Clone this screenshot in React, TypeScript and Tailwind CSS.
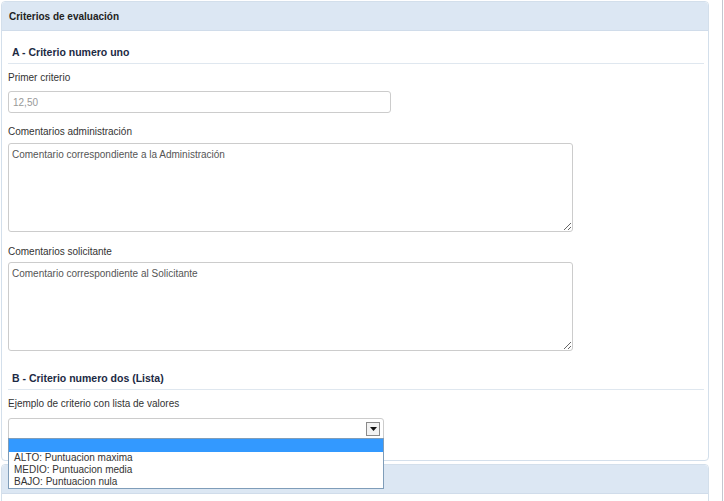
import { useState } from "react";

const font = { fontFamily: '"Liberation Sans", Arial, sans-serif' };

const opciones = [
  "ALTO: Puntuacion maxima",
  "MEDIO: Puntuacion media",
  "BAJO: Puntuacion nula",
];

const SectionTitle = ({ children, className }: { children: string; className?: string }) => (
  <div
    className={`h-[23px] pl-[4px] leading-[22px] text-[10.5px] font-bold text-[#1c2a44] border-b border-[#dfe7ef] ${className ?? ""}`}
  >
    {children}
  </div>
);

const Label = ({ children, className }: { children: string; className?: string }) => (
  <div className={`h-[12px] leading-[12px] text-[10px] text-[#333] ${className ?? ""}`}>{children}</div>
);

export default function App() {
  const [open] = useState(true);

  return (
    <div
      className="w-[723px] h-[501px] overflow-hidden bg-white border-r border-[#c3c7cf] pl-[1px] pt-[1px]"
      style={font}
    >
      {/* panel 1 */}
      <div className="w-[708px] border border-[#d3dfeb] rounded-[4px]">
        <div className="h-[29px] bg-[#dce7f3] border-b border-[#d0dcea] rounded-t-[4px] pl-[7px] leading-[29px] text-[10px] font-bold text-[#222]">
          Criterios de evaluación
        </div>
        <div className="pl-[6px] pr-[4px] pt-[10px] pb-[21px]">
          <SectionTitle>A - Criterio numero uno</SectionTitle>
          <Label className="mt-[8px]">Primer criterio</Label>
          <input
            readOnly
            defaultValue="12,50"
            className="mt-[7px] block w-[383px] h-[22px] border border-[#cccccc] rounded-[3px] px-[4px] text-[10px] text-[#999] outline-none"
            style={font}
          />
          <Label className="mt-[13px]">Comentarios administración</Label>
          <textarea
            readOnly
            defaultValue="Comentario correspondiente a la Administración"
            className="mt-[5px] block w-[565px] h-[89px] border border-[#cccccc] rounded-[3px] px-[3px] py-[5px] text-[10px] leading-[12px] text-[#555] outline-none"
            style={font}
          />
          <Label className="mt-[14px]">Comentarios solicitante</Label>
          <textarea
            readOnly
            defaultValue="Comentario correspondiente al Solicitante"
            className="mt-[4px] block w-[565px] h-[89px] border border-[#cccccc] rounded-[3px] px-[3px] py-[5px] text-[10px] leading-[12px] text-[#555] outline-none"
            style={font}
          />
          <SectionTitle className="mt-[16px]">B - Criterio numero dos (Lista)</SectionTitle>
          <Label className="mt-[8px]">Ejemplo de criterio con lista de valores</Label>
          <div className="relative mt-[8px] w-[376px]">
            <div className="h-[21px] border border-[#cccccc] rounded-t-[3px] flex items-center justify-end pr-[3px]">
              <div className="w-[14px] h-[14px] border border-[#8a8a8a] bg-[#f2f2f2] flex items-center justify-center">
                <svg width="7" height="4" viewBox="0 0 7 4">
                  <path d="M0 0h7L3.5 4z" fill="#111" />
                </svg>
              </div>
            </div>
            {open && (
              <div className="absolute left-0 top-[20px] w-[376px] z-10 bg-white border border-[#7f9db9] text-[10px] leading-[12px] text-[#333]">
                <div className="h-[13px] bg-[#3399ff]" />
                {opciones.map((o) => (
                  <div key={o} className="h-[12px] pl-[5px]">
                    {o}
                  </div>
                ))}
              </div>
            )}
          </div>
        </div>
      </div>

      {/* panel 2 */}
      <div className="mt-[3px] w-[708px] h-[60px] border border-[#d3dfeb] rounded-[4px]">
        <div className="h-[29px] bg-[#dce7f3] border-b border-[#d0dcea] rounded-t-[4px]" />
      </div>
    </div>
  );
}
